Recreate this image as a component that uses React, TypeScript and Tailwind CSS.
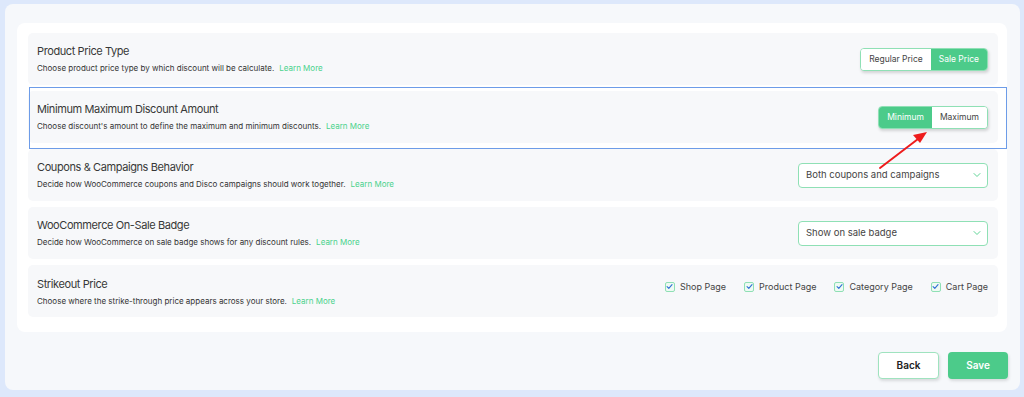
import { ChevronDown } from "lucide-react";

type Row = {
  title: string;
  desc: string;
  control: React.ReactNode;
  top?: boolean;
};

function Segmented({ items, active }: { items: string[]; active: number }) {
  return (
    <div className="flex h-[23px] overflow-hidden rounded-[4px] border border-[#8fe0b5] bg-white shadow-[1px_2px_3px_rgba(0,0,0,0.15)]">
      {items.map((label, i) => (
        <div
          key={label}
          className={`flex items-center px-[8px] text-[8.5px] ${
            i === active ? "bg-[#4ccb8a] text-white" : "bg-white text-[#444]"
          }`}
        >
          {label}
        </div>
      ))}
    </div>
  );
}

function Select({ value }: { value: string }) {
  return (
    <div className="flex h-[25px] w-[190px] items-center justify-between rounded-[4px] border border-[#8fe0b5] bg-white pl-[7px] pr-[4px] text-[9.5px] text-[#444]">
      <span>{value}</span>
      <ChevronDown size={12} strokeWidth={2} color="#5fd597" />
    </div>
  );
}

function Check({ label }: { label: string }) {
  return (
    <label className="flex items-center gap-[5px] text-[9px] text-[#444]">
      <span className="flex h-[10px] w-[10px] items-center justify-center rounded-[2px] border border-[#8fe0b5] bg-[#eefaf3]">
        <svg width="7" height="7" viewBox="0 0 10 10" fill="none">
          <path d="M1.5 5.2 4 7.6 8.6 2.4" stroke="#2f6fd6" strokeWidth="1.6" strokeLinecap="round" strokeLinejoin="round" />
        </svg>
      </span>
      {label}
    </label>
  );
}

const ROWS: Row[] = [
  {
    title: "Product Price Type",
    desc: "Choose product price type by which discount will be calculate.",
    control: <Segmented items={["Regular Price", "Sale Price"]} active={1} />,
  },
  {
    title: "Minimum Maximum Discount Amount",
    desc: "Choose discount's amount to define the maximum and minimum discounts.",
    control: <Segmented items={["Minimum", "Maximum"]} active={0} />,
  },
  {
    title: "Coupons & Campaigns Behavior",
    desc: "Decide how WooCommerce coupons and Disco campaigns should work together.",
    control: <Select value="Both coupons and campaigns" />,
  },
  {
    title: "WooCommerce On-Sale Badge",
    desc: "Decide how WooCommerce on sale badge shows for any discount rules.",
    control: <Select value="Show on sale badge" />,
  },
  {
    title: "Strikeout Price",
    desc: "Choose where the strike-through price appears across your store.",
    top: true,
    control: (
      <div className="flex items-center gap-[18px]">
        <Check label="Shop Page" />
        <Check label="Product Page" />
        <Check label="Category Page" />
        <Check label="Cart Page" />
      </div>
    ),
  },
];

export default function App() {
  return (
    <div
      className="relative h-[397px] w-[1024px] overflow-hidden bg-[#dde8fb] pl-[5px] pr-[4px] pt-[4px]"
      style={{ fontFamily: "Inter, 'Noto Sans', sans-serif" }}
    >
      <div className="h-[386px] rounded-[8px] bg-[#f6f8fb] pl-[12px] pr-[13px] pt-[19px]">
        <div className="flex flex-col gap-[6px] rounded-[8px] bg-white pb-[15px] pl-[11px] pr-[9px] pt-[10px]">
          {ROWS.map((row) => (
            <div
              key={row.title}
              className={`flex h-[52px] justify-between rounded-[5px] bg-[#f7f8fa] pl-[9px] pr-[10px] ${
                row.top ? "items-start pt-[15px]" : "items-center"
              }`}
            >
              <div className={`flex flex-col gap-[5px] ${row.top ? "-mt-[3px]" : ""}`}>
                <div className="text-[11px] leading-[14px] tracking-[-0.4px] text-[#383838]">{row.title}</div>
                <div className="text-[8px] leading-[11px] text-[#333]">
                  {row.desc}
                  <span className="ml-[5px] text-[#4ad28c]">Learn More</span>
                </div>
              </div>
              {row.control}
            </div>
          ))}
        </div>
        <div className="mt-[20px] flex justify-end gap-[9px] pr-[-1px]">
          <button
            type="button"
            className="h-[27px] w-[61px] rounded-[4px] border border-[#9fe3bf] bg-white text-[10px] font-semibold text-[#222] shadow-[1px_2px_3px_rgba(0,0,0,0.12)]"
          >
            Back
          </button>
          <button
            type="button"
            className="mr-[-1px] h-[27px] w-[60px] rounded-[4px] bg-[#4ccb8a] text-[10px] font-semibold text-white shadow-[1px_2px_3px_rgba(0,0,0,0.12)]"
          >
            Save
          </button>
        </div>
      </div>

      {/* annotation: highlight box + arrow */}
      <div className="pointer-events-none absolute left-[29px] top-[87px] h-[62px] w-[978px] border-[1.5px] border-[#6d9ce8]" />
      <svg className="pointer-events-none absolute left-0 top-0" width="1024" height="397">
        <line x1="880" y1="168" x2="918" y2="139" stroke="#ee1c1c" strokeWidth="2" strokeLinecap="round" />
        <polygon points="927,132 913,135 920,143" fill="#ee1c1c" />
      </svg>
    </div>
  );
}
